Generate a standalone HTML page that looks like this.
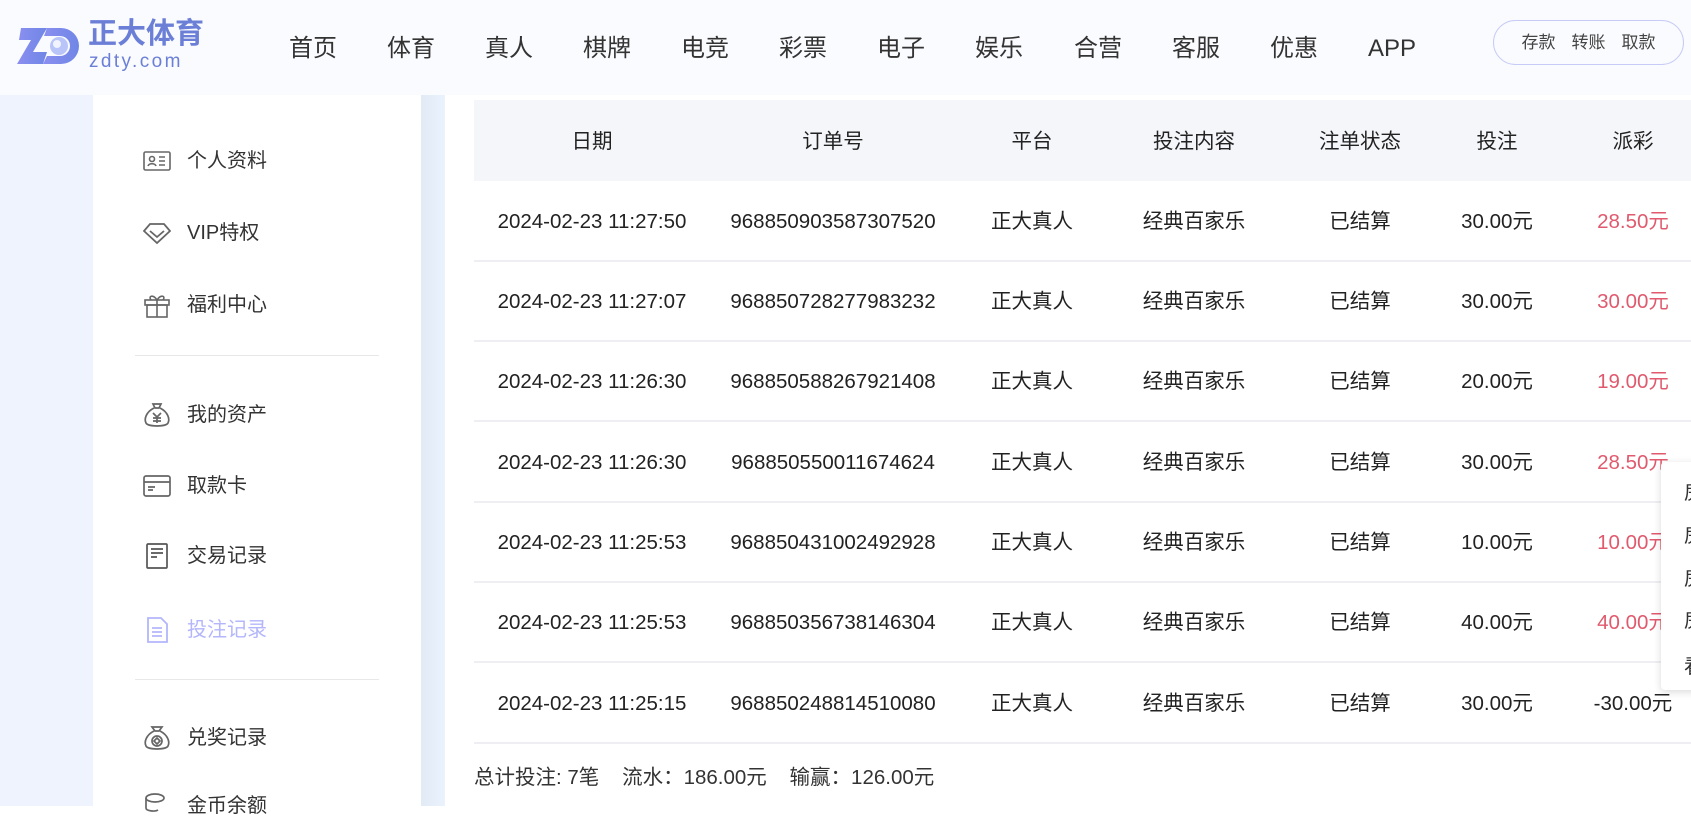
<!DOCTYPE html>
<html><head><meta charset="utf-8"><style>
*{margin:0;padding:0;box-sizing:border-box;line-height:1}
body{width:1691px;height:806px;overflow:hidden;background:#fff;font-family:"Liberation Sans","Noto Sans CJK SC",sans-serif;color:#333;position:relative}
.hdr{position:absolute;left:0;top:0;width:1691px;height:95px;background:#fafbfe}
.nav{position:absolute;top:49px;font-size:24px;color:#333;transform:translate(-50%,-50%);white-space:nowrap}
.pill{position:absolute;left:1493px;top:20px;width:191px;height:45px;border:1.5px solid #c7cbf5;border-radius:23px;font-size:17px;color:#444;display:flex;justify-content:center;align-items:center;gap:16px}
.lbg{position:absolute;left:0;top:95px;width:93px;height:711px;background:#eef3fd}
.panel{position:absolute;left:93px;top:95px;width:328px;height:711px;background:#fff}
.strip{position:absolute;left:421px;top:95px;width:24px;height:711px;background:linear-gradient(90deg,#e2eaf6,#eaf2fd)}
.si{position:absolute;left:187px;font-size:20px;color:#333;transform:translateY(-50%);white-space:nowrap;margin-top:3px}
.ic{position:absolute;left:143px;width:28px;height:28px;transform:translateY(-50%);margin-top:3px}
.div{position:absolute;left:135px;width:244px;height:1px;background:#e8e8e8}
.th{position:absolute;left:474px;top:100px;width:1217px;height:81px;background:#f4f6fa}
.c{position:absolute;transform:translate(-50%,-50%);font-size:20.5px;white-space:nowrap;color:#222;margin-top:1px}
.hl{position:absolute;left:474px;width:1217px;height:2px;background:#efeff3}
.red{color:#e05a6e}
.pop{position:absolute;left:1661px;top:462px;width:40px;height:228px;background:#fff;border-radius:4px;box-shadow:0 2px 8px rgba(0,0,0,.15);overflow:hidden}
.pop span{position:absolute;left:23px;font-size:20px;transform:translateY(-50%);color:#333}
</style></head><body>
<div class="hdr">
<svg style="position:absolute;left:17px;top:24px" width="64" height="50" viewBox="0 0 64 50">
<defs><linearGradient id="g" x1="0" x2="1"><stop offset="0" stop-color="#8b8ff0"/><stop offset="1" stop-color="#6f86e6"/></linearGradient></defs>
<path d="M4 4 H30 L16 28 H30 L26 40 H0 L14 16 H2 Z" fill="url(#g)"/>
<path d="M30 4 H44 A18 18 0 0 1 44 40 H26 L30 32 H43 A10 10 0 0 0 43 12 H27 Z" fill="url(#g)"/>
<circle cx="42" cy="22" r="9" fill="#b9c4f8"/><circle cx="40" cy="20" r="4" fill="#fff" opacity=".8"/>
</svg>
<div style="position:absolute;left:88px;top:20px;font-size:29px;color:#6b7fd7;font-weight:bold">正大体育</div>
<div style="position:absolute;left:89px;top:52px;font-size:19px;color:#6b7fd7;letter-spacing:2.4px">zdty.com</div>
<div class="nav" style="left:313px">首页</div>
<div class="nav" style="left:411px">体育</div>
<div class="nav" style="left:509px">真人</div>
<div class="nav" style="left:607px">棋牌</div>
<div class="nav" style="left:705px">电竞</div>
<div class="nav" style="left:803px">彩票</div>
<div class="nav" style="left:901px">电子</div>
<div class="nav" style="left:999px">娱乐</div>
<div class="nav" style="left:1098px">合营</div>
<div class="nav" style="left:1196px">客服</div>
<div class="nav" style="left:1294px">优惠</div>
<div class="nav" style="left:1392px">APP</div>
<div class="pill"><span>存款</span><span>转账</span><span>取款</span></div>
</div>
<div class="lbg"></div><div class="panel"></div><div class="strip"></div>

<svg class="ic" style="top:158px" viewBox="0 0 28 28" fill="none" stroke="#666" stroke-width="1.6"><rect x="1" y="5" width="26" height="18" rx="1.5"/><circle cx="9" cy="12" r="2.5"/><path d="M5 19c1-3 7-3 8 0M16 10h6M16 14h6M16 18h6"/></svg>
<div class="si" style="top:158px">个人资料</div>
<svg class="ic" style="top:230px" viewBox="0 0 28 28" fill="none" stroke="#666" stroke-width="1.8"><path d="M7 5h14l6 7-13 12L1 12z"/><path d="M7 12l7 6 7-6"/></svg>
<div class="si" style="top:230px">VIP特权</div>
<svg class="ic" style="top:302px" viewBox="0 0 28 28" fill="none" stroke="#666" stroke-width="1.6"><rect x="2" y="9" width="24" height="5"/><rect x="4" y="14" width="20" height="12"/><path d="M14 9v17M14 9c-4-6-9-4-6 0M14 9c4-6 9-4 6 0"/></svg>
<div class="si" style="top:302px">福利中心</div>
<div class="div" style="top:355px"></div>
<svg class="ic" style="top:412px" viewBox="0 0 28 28" fill="none" stroke="#666" stroke-width="1.7"><path d="M10 3h8l-2 4h-4z"/><path d="M11 7C3 11 1 18 3 22c2 4 20 4 22 0 2-4 0-11-8-15"/><path d="M10 12l4 4 4-4M14 16v6M10 17h8M10 20h8"/></svg>
<div class="si" style="top:412px">我的资产</div>
<svg class="ic" style="top:483px" viewBox="0 0 28 28" fill="none" stroke="#666" stroke-width="1.7"><rect x="1" y="4" width="26" height="20" rx="2"/><path d="M1 10h26M5 15h7M5 18h5"/></svg>
<div class="si" style="top:483px">取款卡</div>
<svg class="ic" style="top:553px" viewBox="0 0 28 28" fill="none" stroke="#555" stroke-width="1.7"><rect x="4" y="2" width="20" height="24" rx="1"/><path d="M8 7h12M8 11h12M8 15h6"/></svg>
<div class="si" style="top:553px">交易记录</div>
<svg class="ic" style="top:627px" viewBox="0 0 28 28" fill="none" stroke="#b3b6fb" stroke-width="1.8"><path d="M5 2h13l6 6v18H5z"/><path d="M9 12h10M9 16h10M9 20h10"/></svg>
<div class="si" style="top:627px;color:#b3b6fb">投注记录</div>
<div class="div" style="top:679px"></div>
<svg class="ic" style="top:735px" viewBox="0 0 28 28" fill="none" stroke="#666" stroke-width="1.7"><path d="M9 3h10l-3 4h-4z"/><path d="M11 7C3 11 1 18 3 22c2 4 20 4 22 0 2-4 0-11-8-15"/><circle cx="14" cy="17" r="5"/><path d="M14 14l3 3-3 3-3-3z"/></svg>
<div class="si" style="top:735px">兑奖记录</div>
<svg class="ic" style="top:803px" viewBox="0 0 28 28" fill="none" stroke="#666" stroke-width="1.7"><ellipse cx="12" cy="6" rx="9" ry="4"/><path d="M3 6v10c0 3 9 4 12 2"/></svg>
<div class="si" style="top:803px">金币余额</div>

<div class="th"></div>
<div class="c" style="left:592px;top:141px">日期</div>
<div class="c" style="left:833px;top:141px">订单号</div>
<div class="c" style="left:1032px;top:141px">平台</div>
<div class="c" style="left:1194px;top:141px">投注内容</div>
<div class="c" style="left:1360px;top:141px">注单状态</div>
<div class="c" style="left:1497px;top:141px">投注</div>
<div class="c" style="left:1633px;top:141px">派彩</div>

<div class="c" style="left:592px;top:221px">2024-02-23 11:27:50</div><div class="c" style="left:833px;top:221px">968850903587307520</div><div class="c" style="left:1032px;top:221px">正大真人</div><div class="c" style="left:1194px;top:221px">经典百家乐</div><div class="c" style="left:1360px;top:221px">已结算</div><div class="c" style="left:1497px;top:221px">30.00元</div><div class="c red" style="left:1633px;top:221px">28.50元</div>
<div class="hl" style="top:260px"></div>
<div class="c" style="left:592px;top:301px">2024-02-23 11:27:07</div><div class="c" style="left:833px;top:301px">968850728277983232</div><div class="c" style="left:1032px;top:301px">正大真人</div><div class="c" style="left:1194px;top:301px">经典百家乐</div><div class="c" style="left:1360px;top:301px">已结算</div><div class="c" style="left:1497px;top:301px">30.00元</div><div class="c red" style="left:1633px;top:301px">30.00元</div>
<div class="hl" style="top:340px"></div>
<div class="c" style="left:592px;top:381px">2024-02-23 11:26:30</div><div class="c" style="left:833px;top:381px">968850588267921408</div><div class="c" style="left:1032px;top:381px">正大真人</div><div class="c" style="left:1194px;top:381px">经典百家乐</div><div class="c" style="left:1360px;top:381px">已结算</div><div class="c" style="left:1497px;top:381px">20.00元</div><div class="c red" style="left:1633px;top:381px">19.00元</div>
<div class="hl" style="top:420px"></div>
<div class="c" style="left:592px;top:462px">2024-02-23 11:26:30</div><div class="c" style="left:833px;top:462px">968850550011674624</div><div class="c" style="left:1032px;top:462px">正大真人</div><div class="c" style="left:1194px;top:462px">经典百家乐</div><div class="c" style="left:1360px;top:462px">已结算</div><div class="c" style="left:1497px;top:462px">30.00元</div><div class="c red" style="left:1633px;top:462px">28.50元</div>
<div class="hl" style="top:501px"></div>
<div class="c" style="left:592px;top:542px">2024-02-23 11:25:53</div><div class="c" style="left:833px;top:542px">968850431002492928</div><div class="c" style="left:1032px;top:542px">正大真人</div><div class="c" style="left:1194px;top:542px">经典百家乐</div><div class="c" style="left:1360px;top:542px">已结算</div><div class="c" style="left:1497px;top:542px">10.00元</div><div class="c red" style="left:1633px;top:542px">10.00元</div>
<div class="hl" style="top:581px"></div>
<div class="c" style="left:592px;top:622px">2024-02-23 11:25:53</div><div class="c" style="left:833px;top:622px">968850356738146304</div><div class="c" style="left:1032px;top:622px">正大真人</div><div class="c" style="left:1194px;top:622px">经典百家乐</div><div class="c" style="left:1360px;top:622px">已结算</div><div class="c" style="left:1497px;top:622px">40.00元</div><div class="c red" style="left:1633px;top:622px">40.00元</div>
<div class="hl" style="top:661px"></div>
<div class="c" style="left:592px;top:703px">2024-02-23 11:25:15</div><div class="c" style="left:833px;top:703px">968850248814510080</div><div class="c" style="left:1032px;top:703px">正大真人</div><div class="c" style="left:1194px;top:703px">经典百家乐</div><div class="c" style="left:1360px;top:703px">已结算</div><div class="c" style="left:1497px;top:703px">30.00元</div><div class="c" style="left:1633px;top:703px">-30.00元</div>
<div class="hl" style="top:742px"></div>

<div style="position:absolute;left:474px;top:768px;font-size:20.5px;color:#333;white-space:pre">总计投注: 7笔    流水：186.00元    输赢：126.00元</div>

<div class="pop"><span style="top:31px">房</span><span style="top:74px">房</span><span style="top:117px">房</span><span style="top:159px">房</span><span style="top:205px">看</span></div>
</body></html>
